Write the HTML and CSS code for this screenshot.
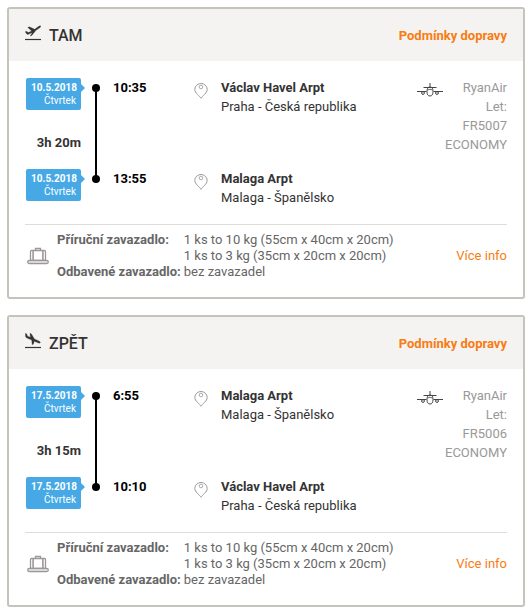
FILE: index.html
```html
<!DOCTYPE html>
<html lang="cs">
<head>
    <meta charset="UTF-8">
    <meta name="viewport" content="width=device-width, initial-scale=1.0">
    <title>Doprava</title>
    <link rel="stylesheet" href="styles.css">
</head>
<body>
    <!-- Shared icons -->
    <svg class="sprite" aria-hidden="true">
        <symbol id="icon-takeoff" viewBox="0 0 16 16">
            <path d="M0 14.5H16" fill="none" stroke="currentColor" stroke-width="1.2"/>
            <path d="M.2 6.800l1.200-.6 1.900 1.400 3.400-1.600L2.800 2.500l1.500-.7 5.400 2.500L13.400 1.600c1-.7 1.900-1 2.300-.6.3.5-.4 1.400-1.300 2L11 5.300 6.800 10.400l-1.500.6L7.300 7.400 3.400 9.300c-.6.3-1.200.2-1.600-.2z" fill="currentColor" stroke="currentColor" stroke-width=".3"/>
        </symbol>
        <symbol id="icon-landing" viewBox="0 0 16 16">
            <path d="M0 14.5H16" fill="none" stroke="currentColor" stroke-width="1.2"/>
            <path d="M.3.4l1.200.4 1.100 2.400 2.800 1.100L5 .3l1.400.6 3 5 4.400 2c1 .5 1.700 1.200 1.500 1.800-.3.6-1.300.5-2.300.1L9.200 8.200 8.500 11l-1.300.8-.5-4.700L1.800 4.900C1 4.500.7 4 .6 3.400z" fill="currentColor" stroke="currentColor" stroke-width=".3"/>
        </symbol>
        <symbol id="icon-pin" viewBox="0 0 14 16">
            <path d="M7 15.300C5.600 12.800.8 10 .8 6.500a6.200 6 0 0 1 12.400 0C13.200 10 8.400 12.800 7 15.300z" fill="none" stroke="currentColor"/>
            <circle cx="7" cy="4" r="1.8" fill="none" stroke="currentColor" stroke-width=".8"/>
        </symbol>
        <symbol id="icon-plane" viewBox="0 0 26 14">
            <g fill="none" stroke="currentColor">
                <path d="M13 0v4M6.500 4.500H19.500"/>
                <path d="M0 8.500H9.500M16.500 8.500H26"/>
                <ellipse cx="13" cy="8.500" rx="3" ry="4.500"/>
                <path d="M10.500 7q2.500-1.500 5 0" stroke-width=".8"/>
                <circle cx="6" cy="10" r="1.400"/>
                <circle cx="20" cy="10" r="1.400"/>
            </g>
        </symbol>
        <symbol id="icon-luggage" viewBox="0 0 22 18">
            <g fill="none" stroke="currentColor">
                <path d="M8.500 3.500v-2h5v2" stroke-width="1.300"/>
                <rect x="3.500" y="3.500" width="15" height="10" rx="1" stroke-width="1.300"/>
                <path d="M5.500 4v9M16.500 4v9" stroke="#d9b08c"/>
                <path d="M6.500 4v9M15.500 4v9" stroke="#8fa3c8"/>
                <rect x=".7" y="13.500" width="20.600" height="3" rx="1.500" fill="#f0efee" stroke-width="1.300"/>
            </g>
        </symbol>
    </svg>

    <main>
        <!-- Outbound flight -->
        <section class="card">
            <header class="card-header">
                <svg class="direction-icon"><use href="#icon-takeoff"/></svg>
                <h2>TAM</h2>
                <a class="terms" href="#">Podmínky dopravy</a>
            </header>
            <div class="flight">
                <div class="stops">
                    <div class="stop">
                        <div class="date"><strong>10.5.2018</strong>Čtvrtek</div>
                        <span class="dot"></span>
                        <time class="time">10:35</time>
                        <svg class="pin"><use href="#icon-pin"/></svg>
                        <div class="place"><strong>Václav Havel Arpt</strong>Praha - Česká republika</div>
                    </div>
                    <div class="leg">
                        <span class="duration">3h 20m</span>
                        <span class="line"></span>
                    </div>
                    <div class="stop">
                        <div class="date"><strong>10.5.2018</strong>Čtvrtek</div>
                        <span class="dot"></span>
                        <time class="time">13:55</time>
                        <svg class="pin"><use href="#icon-pin"/></svg>
                        <div class="place"><strong>Malaga Arpt</strong>Malaga - Španělsko</div>
                    </div>
                </div>
                <svg class="plane"><use href="#icon-plane"/></svg>
                <div class="airline">RyanAir<br>Let: FR5007<br>ECONOMY</div>
            </div>
            <footer class="baggage">
                <svg class="luggage"><use href="#icon-luggage"/></svg>
                <dl>
                    <dt>Příruční zavazadlo:</dt>
                    <dd>1 ks to 10 kg (55cm x 40cm x 20cm)<br>1 ks to 3 kg (35cm x 20cm x 20cm)</dd>
                    <dt>Odbavené zavazadlo:</dt>
                    <dd>bez zavazadel</dd>
                </dl>
                <a class="more" href="#">Více info</a>
            </footer>
        </section>

        <!-- Return flight -->
        <section class="card">
            <header class="card-header">
                <svg class="direction-icon"><use href="#icon-landing"/></svg>
                <h2>ZPĚT</h2>
                <a class="terms" href="#">Podmínky dopravy</a>
            </header>
            <div class="flight">
                <div class="stops">
                    <div class="stop">
                        <div class="date"><strong>17.5.2018</strong>Čtvrtek</div>
                        <span class="dot"></span>
                        <time class="time">6:55</time>
                        <svg class="pin"><use href="#icon-pin"/></svg>
                        <div class="place"><strong>Malaga Arpt</strong>Malaga - Španělsko</div>
                    </div>
                    <div class="leg">
                        <span class="duration">3h 15m</span>
                        <span class="line"></span>
                    </div>
                    <div class="stop">
                        <div class="date"><strong>17.5.2018</strong>Čtvrtek</div>
                        <span class="dot"></span>
                        <time class="time">10:10</time>
                        <svg class="pin"><use href="#icon-pin"/></svg>
                        <div class="place"><strong>Václav Havel Arpt</strong>Praha - Česká republika</div>
                    </div>
                </div>
                <svg class="plane"><use href="#icon-plane"/></svg>
                <div class="airline">RyanAir<br>Let: FR5006<br>ECONOMY</div>
            </div>
            <footer class="baggage">
                <svg class="luggage"><use href="#icon-luggage"/></svg>
                <dl>
                    <dt>Příruční zavazadlo:</dt>
                    <dd>1 ks to 10 kg (55cm x 40cm x 20cm)<br>1 ks to 3 kg (35cm x 20cm x 20cm)</dd>
                    <dt>Odbavené zavazadlo:</dt>
                    <dd>bez zavazadel</dd>
                </dl>
                <a class="more" href="#">Více info</a>
            </footer>
        </section>
    </main>
</body>
</html>
```

FILE: styles.css
```css
/* Global Styles */
* {
    box-sizing: border-box;
}

body {
    margin: 0;
    background-color: #fff;
    color: #333;
    font-family: Roboto, Arial, sans-serif;
    font-size: 13px;
    line-height: 19px;
}

a {
    color: #f97c12; /* Orange links */
    text-decoration: none;
}

a:hover {
    text-decoration: underline;
}

.sprite {
    display: none;
}

main {
    display: flex;
    flex-direction: column;
    gap: 16px;
    padding: 7px 5px 4px 7px;
}

/* Card */
.card {
    border: 2px solid #c4c3bc;
    border-radius: 3px;
}

.card-header {
    display: flex;
    align-items: center;
    height: 52px;
    padding: 0 16px;
    background-color: #f4f3f1;
}

.direction-icon {
    width: 16px;
    height: 16px;
    margin: 0 8px 4px 0;
}

.card-header h2 {
    margin: 0;
    font-size: 16px;
    font-weight: 500;
}

.terms {
    margin-left: auto;
    font-weight: bold;
}

/* Flight */
.flight {
    display: flex;
    padding: 17px 16px 17px 17px;
}

.stops {
    flex: 1;
}

.stop {
    display: flex;
    align-items: flex-start;
}

.stop strong {
    display: block;
}

.date {
    position: relative;
    width: 55px;
    height: 32px;
    padding: 3px 5px;
    background-color: #46a9e6;
    border-radius: 2px;
    color: #fff;
    font-size: 10px;
    line-height: 13px;
    text-align: right;
}

/* Small arrow pointing at the timeline */
.date::after {
    content: "";
    position: absolute;
    top: 6px;
    left: 100%;
    border: 4px solid transparent;
    border-left-color: #46a9e6;
    border-right: 0;
}

.dot {
    width: 8px;
    height: 8px;
    margin: 6px 13px 0 11px;
    background-color: #000;
    border-radius: 50%;
}

.time {
    width: 81px;
    color: #000;
    font-weight: bold;
}

.pin {
    width: 14px;
    height: 16px;
    margin: 5px 13px 0 0;
    color: #999;
}

.place {
    height: 38px;
}

.leg {
    display: flex;
    align-items: center;
    height: 53px;
}

.duration {
    width: 55px;
    text-align: right;
    font-weight: bold;
}

/* Reaches up and down to both dots */
.line {
    align-self: stretch;
    width: 2px;
    margin: -28px 0 -10px 14px;
    background-color: #000;
}

.plane {
    width: 26px;
    height: 14px;
    margin-top: 5px;
    color: #444;
}

.airline {
    width: 64px;
    color: #999;
    text-align: right;
}

/* Baggage */
.baggage {
    display: flex;
    align-items: center;
    margin: 0 16px;
    padding: 7px 0 17px;
    border-top: 1px solid #deddd8;
    color: #666;
    line-height: 16px;
}

.luggage {
    width: 22px;
    height: 18px;
    margin: 0 8px 0 2px;
    color: #999;
}

.baggage dl {
    display: grid;
    grid-template-columns: auto auto;
    column-gap: 3px;
    margin: 0;
}

.baggage dt {
    font-weight: bold;
}

.baggage dd {
    margin: 0;
}

.more {
    margin-left: auto;
}
```
